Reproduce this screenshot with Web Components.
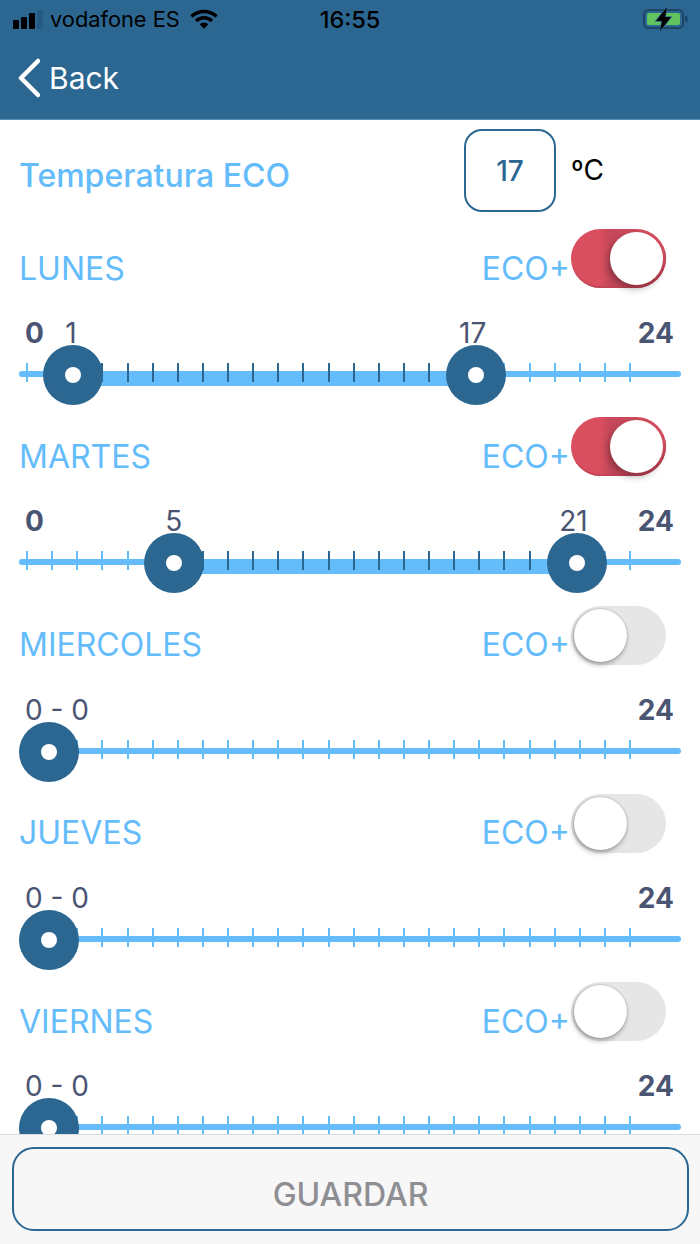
<!DOCTYPE html>
<html lang="es"><head><meta charset="utf-8"><title>ECO</title>
<style>
html,body{margin:0;padding:0;background:#fff}
body{font-family:Inter,"Liberation Sans",sans-serif;width:700px;height:1244px;overflow:hidden}
</style></head><body>
<app-page>
  <status-bar slot="top"></status-bar>
  <nav-bar slot="top" label="Back"></nav-bar>
  <eco-temp value="17"></eco-temp>
  <day-row name="LUNES" on from="1" to="17"></day-row>
  <day-row name="MARTES" on from="5" to="21"></day-row>
  <day-row name="MIERCOLES" from="0" to="0"></day-row>
  <day-row name="JUEVES" from="0" to="0"></day-row>
  <day-row name="VIERNES" from="0" to="0"></day-row>
  <save-bar slot="bottom" label="GUARDAR"></save-bar>
</app-page>
<script>
const el=(name,render)=>customElements.define(name,class extends HTMLElement{
  connectedCallback(){ if(!this.shadowRoot){this.attachShadow({mode:'open'}).innerHTML=render(this);} }
});
el('app-page',()=>`<style>
:host{display:flex;flex-direction:column;height:1244px;width:700px}
.top{flex:none;background:#2c6792;height:120px;display:flex;flex-direction:column;box-shadow:inset 0 -1px 0 #5e8fb0}
main{flex:1;min-height:0;overflow:hidden;display:flex;flex-direction:column}
.bottom{flex:none}
</style><div class="top"><slot name="top"></slot></div><main><slot></slot></main><div class="bottom"><slot name="bottom"></slot></div>`);
el('status-bar',()=>`<style>
:host{display:flex;align-items:center;height:38px;padding:0 11px 0 13px;position:relative;color:#000;font-size:21.800px;flex:none}
.sig{display:flex;align-items:flex-end;gap:2.500px;height:19px;width:30px}
.sig i{display:block;width:5.500px;border-radius:1px;background:#000}
.name{margin-left:7px}
svg{display:block}
.wifi{margin-left:10px}
.time{position:absolute;left:0;right:0;text-align:center;font-weight:500;font-size:23.500px}
.bat{margin-left:auto}
</style>
<div class="sig"><i style="height:9px"></i><i style="height:12px"></i><i style="height:16px"></i><i style="height:19px;background:#255a82"></i></div>
<span class="name">vodafone ES</span>
<svg class="wifi" width="28" height="20" viewBox="0 0 28 20"><path d="M1.500 7.500a18 18 0 0 1 25 0M6 12a11.500 11.500 0 0 1 16 0" fill="none" stroke="#000" stroke-width="3.400"/><path d="M9.500 15.200a6.500 6.500 0 0 1 9 0L14 19.800z" fill="#000"/></svg>
<span class="time">16:55</span>
<svg class="bat" width="46" height="24" viewBox="0 0 46 24"><rect x="1" y="3" width="39" height="18" rx="4.500" fill="none" stroke="#1d4666" stroke-width="2"/><rect x="4" y="6" width="33" height="12" rx="2" fill="#62c45f"/><path d="M42 9h1.500a1 1 0 0 1 1 1v4a1 1 0 0 1-1 1H42z" fill="#1d4666"/><path d="M24 0L13 14h6l-2 10 11-14h-6z" fill="#000" stroke="#2c6792" stroke-width="1.500" paint-order="stroke"/></svg>`);
el('nav-bar',h=>`<style>
:host{display:flex;align-items:center;height:80px;padding:0 0 0 18px;color:#fff;font-size:30px;flex:none}
span{margin-left:9px}
svg{display:block}
</style><svg width="22" height="40" viewBox="0 0 22 40"><path d="M20 3L3 20l17 17" fill="none" stroke="#fff" stroke-width="4.500" stroke-linecap="round" stroke-linejoin="round"/></svg><span>${h.getAttribute('label')}</span>`);
el('eco-temp',h=>`<style>
:host{display:flex;align-items:center;flex:none;height:83px;margin:9px 0 17px;padding-left:19px}
.t{font-size:32px;font-weight:500;color:#64bcfb;width:445px;padding-top:10px}
.b{box-sizing:border-box;width:92px;height:83px;border:2px solid #2c6792;border-radius:18px;display:flex;align-items:center;justify-content:center;color:#2c6792;font-size:28px;font-weight:500}
.u{margin-left:15px;font-size:28px;color:#000;padding-bottom:2px}
</style><span class="t">Temperatura ECO</span><div class="b">${h.getAttribute('value')}</div><span class="u">ºC</span>`);
el('eco-switch',h=>{const on=h.hasAttribute('on');return `<style>
:host{display:block;width:95px;height:59px;flex:none}
.s{box-sizing:border-box;width:95px;height:59px;border-radius:30px;display:flex;align-items:center;justify-content:${on?'flex-end':'flex-start'};padding:0 3px;
 background:${on?'linear-gradient(90deg,#d94f5f 30%,#c4475a 42%,#d94f5f 100%)':'#e6e6e6'};${on?'box-shadow:inset -1px -2px 1px #c04456':''}}
.k{width:53px;height:53px;border-radius:50%;background:#fff;box-shadow:${on?'-2px 4px 7px rgba(0,0,0,.3)':'-1px 3px 5px rgba(0,0,0,.28),0 0 2px rgba(0,0,0,.3)'}}
</style><div class="s"><div class="k"></div></div>`});
el('range-slider',h=>{
  const a=+h.getAttribute('from'),b=+h.getAttribute('to'),one=a===b;
  const x=v=>(one?29.500:28.800)+25.200*v;
  let ticks='';
  for(let i=0;i<25;i++){const dark=!one&&i>a&&i<b;ticks+=`<i class="${dark?'d':''}"></i>`;}
  const thumb=v=>`<div class="th" style="left:${x(v)}px"></div>`;
  const lab=v=>`<span class="v" style="left:${x(v)-(v>9?3.500:v<2?2:0)}px">${v}</span>`;
  return `<style>
:host{display:block;height:129.250px;position:relative;padding:0 19px;color:#4a5473}
.l{display:flex;justify-content:space-between;align-items:center;height:30px;padding:30px 7px 0 7px;font-size:28px;position:relative}
.l b{font-weight:700}
.l span.o,.l>b:first-child{margin-left:-1px}
.v{position:absolute;bottom:0;height:30px;line-height:30px;transform:translateX(-50%)}
.o{font-weight:400}
.tr{position:relative;height:38px;margin-top:7px}
.line{position:absolute;left:0;right:0;top:16px;height:6px;border-radius:3px;background:#64bcfb}
.rg{position:absolute;top:16px;height:15px;background:#64bcfb}
.tk{position:absolute;left:7px;right:50px;top:8px;display:flex;justify-content:space-between}
.tk i{display:block;width:2px;height:19px;background:#64bcfb}
.tk i.d{background:#2c6792}
.th{position:absolute;top:-10px;width:60px;height:60px;margin-left:-30px;border-radius:50%;background:#2c6792;display:flex;align-items:center;justify-content:center}
.th::after{content:"";width:16px;height:16px;border-radius:50%;background:#fff}
</style>
<div class="l">${one?`<span class="o">0 - 0</span>`:`<b>0</b>${lab(a)}${lab(b)}`}<b>24</b></div>
<div class="tr"><div class="line"></div>${one?'':`<div class="rg" style="left:${x(a)}px;width:${x(b)-x(a)}px"></div>`}<div class="tk">${ticks}</div>${one?thumb(0):thumb(a)+thumb(b)}</div>`});
el('day-row',h=>`<style>
:host{display:block;flex:none;height:188.250px}
.h{display:flex;align-items:center;height:59px;padding:0 34px 0 19px}
.n{flex:1;font-size:32px;color:#64bcfb;padding-top:19px}
.e{font-size:32px;color:#64bcfb;padding-top:19px;margin-right:1px}
</style><div class="h"><span class="n">${h.getAttribute('name')}</span><span class="e">ECO+</span><eco-switch ${h.hasAttribute('on')?'on':''}></eco-switch></div>
<range-slider from="${h.getAttribute('from')}" to="${h.getAttribute('to')}"></range-slider>`);
el('save-bar',h=>`<style>
:host{display:block;box-sizing:border-box;height:110px;background:#f7f7f7;border-top:1px solid #dcdcdc;padding:12px 11px 13px 12px}
button{display:block;box-sizing:border-box;width:100%;height:84px;border:2px solid #2c6792;border-radius:22px;background:#f7f7f7;color:#8e8e93;font:500 32px Inter,"Liberation Sans",sans-serif;padding:10px 0 0}
</style><button>${h.getAttribute('label')}</button>`);
</script></body></html>
